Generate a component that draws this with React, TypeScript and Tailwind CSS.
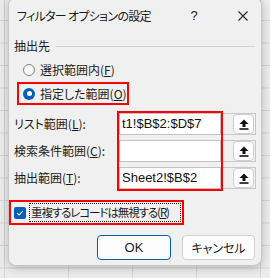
const jp =
  "[font-family:'Noto_Sans_CJK_JP','Noto_Sans',sans-serif] [font-feature-settings:'palt']";

function UpArrow() {
  return (
    <svg width="10" height="11" viewBox="0 0 10 11" className="block">
      <path d="M5 0.5 L9.5 5 L6.5 5 L6.5 8 L3.5 8 L3.5 5 L0.5 5 Z" fill="#111" />
      <rect x="0.5" y="9.2" width="9" height="1.6" fill="#111" />
    </svg>
  );
}

function RefRow({ value }: { value: string }) {
  return (
    <div className="h-[22px] border border-[#c2c2c2] bg-white flex items-center pl-[2px] text-[13px] text-[#111] [font-family:'Liberation_Sans',Arial,sans-serif]">
      {value}
    </div>
  );
}

function PickButton() {
  return (
    <div className="h-[22px] border-y border-r border-[#c8c8c8] bg-[#f0f0f0] flex items-center pl-[10px]">
      <div className="w-[21px] h-[20px] rounded-[4px] border border-[#cfcfcf] bg-[#fdfdfd] flex items-center justify-center">
        <UpArrow />
      </div>
    </div>
  );
}

export default function App() {
  return (
    <div
      className={`w-[270px] h-[278px] overflow-hidden bg-[#ececec] [background-image:linear-gradient(to_bottom,#d2d2d2_1px,transparent_1px),linear-gradient(to_right,#d2d2d2_1px,transparent_1px)] [background-size:100%_22.5px,64px_100%] [background-position:0_20px,4px_0] ${jp}`}
    >
      <div className="ml-[8px] -mt-[3px] w-[254px] h-[269px] rounded-[8px] border border-[#c6c6c6] bg-[#f0f0f0] shadow-[0_2px_10px_rgba(0,0,0,0.22)] flex flex-col text-[#1b1b1b]">
        {/* title bar */}
        <div className="h-[35px] flex items-center pl-[8px] pr-[13px] text-[12px]">
          <span className="flex-1 tracking-[-0.7px]">フィルター オプションの設定</span>
          <span className="w-[12px] text-center mr-[38px] [font-family:'Liberation_Sans',sans-serif] text-[13px]">?</span>
          <svg width="10" height="10" viewBox="0 0 10 10">
            <path d="M0.5 0.5 L9.5 9.5 M9.5 0.5 L0.5 9.5" stroke="#222" strokeWidth="1.1" />
          </svg>
        </div>

        <div className="flex flex-col px-[5px] text-[12px]">
          {/* section */}
          <div className="mt-[4px] h-[18px] flex items-center">
            <span>抽出先</span>
            <div className="flex-1 h-px bg-[#d6d6d6] ml-[6px] mr-[1px]" />
          </div>

          {/* radio 1 */}
          <div className="mt-[5px] h-[20px] ml-[9px] flex items-center gap-[5px]">
            <div className="w-[12px] h-[12px] rounded-full border border-[#858585] bg-[#f7f7f7]" />
            <span>
              選択範囲内(<span className="underline">F</span>)
            </span>
          </div>

          {/* radio 2 */}
          <div className="mt-[2px] ml-[3px] w-[112px] h-[23px] border-2 border-[#ff0000] flex items-center pl-[4px] gap-[5px]">
            <div className="w-[12px] h-[12px] rounded-full bg-[#005fb8] flex items-center justify-center">
              <div className="w-[5px] h-[5px] rounded-full bg-white" />
            </div>
            <span>
              指定した範囲(<span className="underline">O</span>)
            </span>
          </div>

          {/* ranges */}
          <div className="mt-[6px] flex items-start">
            <div className="w-[103px] pt-[2px] flex flex-col gap-[5px]">
              <div className="h-[22px] flex items-center">
                リスト範囲(<span className="underline">L</span>):
              </div>
              <div className="h-[22px] flex items-center">
                検索条件範囲(<span className="underline">C</span>):
              </div>
              <div className="h-[22px] flex items-center">
                抽出範囲(<span className="underline">T</span>):
              </div>
            </div>
            <div className="w-[106px] border-2 border-[#ff0000] flex flex-col gap-[5px]">
              <RefRow value="t1!$B$2:$D$7" />
              <RefRow value="" />
              <RefRow value="Sheet2!$B$2" />
            </div>
            <div className="w-[33px] pt-[2px] flex flex-col gap-[5px]">
              <PickButton />
              <PickButton />
              <PickButton />
            </div>
          </div>

          {/* checkbox */}
          <div className="mt-[9px] -ml-[5px] w-[175px] h-[25px] border-2 border-[#ff0000] flex items-center pl-[3px]">
            <div className="shrink-0 w-[12px] h-[12px] rounded-[2px] bg-[#005fb8] flex items-center justify-center">
              <svg width="8" height="8" viewBox="0 0 8 8">
                <path d="M1.2 4.2 L3.1 6 L6.8 2" stroke="white" strokeWidth="1.1" fill="none" />
              </svg>
            </div>
            <div className="ml-[3px] w-[152px] h-[19px] border border-dotted border-[#222] flex items-center px-[1px] whitespace-nowrap text-[11.5px] tracking-[-1.1px]">
              重複するレコードは無視する(<span className="underline">R</span>)
            </div>
          </div>

          {/* buttons */}
          <div className="mt-[10px] flex justify-end gap-[11px] mr-[1px]">
            <button className="w-[74px] h-[25px] rounded-[4px] border border-[#005fb8] bg-[#fdfdfd] text-[13px] [font-family:'Liberation_Sans',sans-serif]">
              OK
            </button>
            <button className="w-[73px] h-[25px] rounded-[4px] border border-[#d0d0d0] bg-[#fdfdfd] text-[12px]">
              キャンセル
            </button>
          </div>
        </div>
      </div>
    </div>
  );
}
